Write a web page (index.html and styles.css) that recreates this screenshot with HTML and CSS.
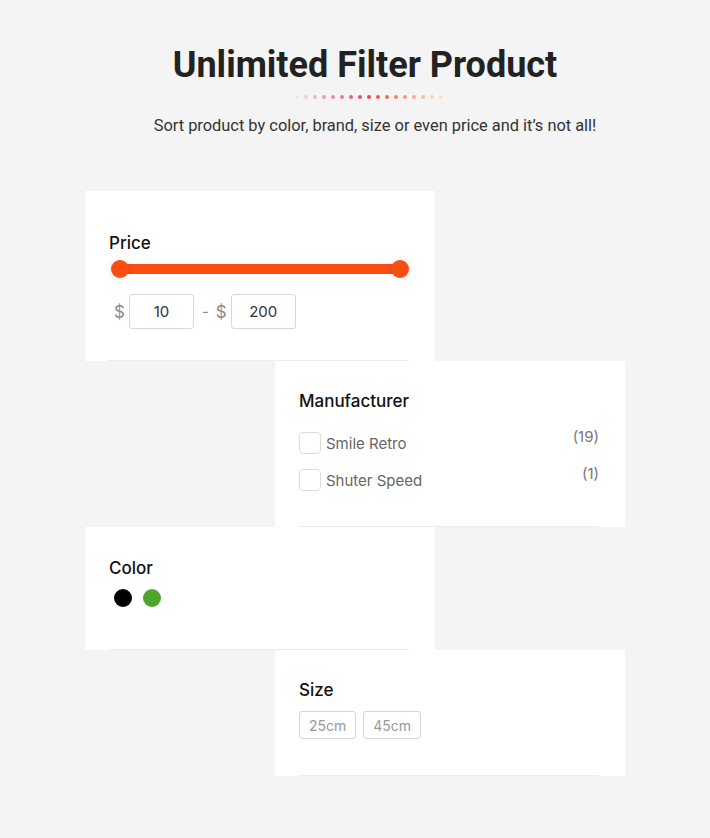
FILE: index.html
```html
<!DOCTYPE html>
<html lang="en">
<head>
<meta charset="utf-8">
<title>Unlimited Filter Product</title>
<link rel="stylesheet" href="styles.css">
</head>
<body>
<header class="intro">
  <h1 class="intro-title">Unlimited Filter Product</h1>
  <div class="dots">
    <span class="dot d1"></span><span class="dot d2"></span><span class="dot d3"></span><span class="dot d4"></span><span class="dot d5"></span><span class="dot d6"></span><span class="dot d7"></span><span class="dot d8"></span><span class="dot d9"></span><span class="dot d10"></span><span class="dot d11"></span><span class="dot d12"></span><span class="dot d13"></span><span class="dot d14"></span><span class="dot d15"></span><span class="dot d16"></span><span class="dot d17"></span>
  </div>
  <p class="intro-sub">Sort product by color, brand, size or even price and it’s not all!</p>
</header>

<main class="filters">
  <section class="card card-left card-price">
    <div class="card-inner">
      <h2 class="card-title">Price</h2>
      <div class="slider">
        <div class="slider-track"></div>
        <span class="knob knob-left"></span>
        <span class="knob knob-right"></span>
      </div>
      <div class="price-row">
        <span class="currency">$</span>
        <span class="price-box">10</span>
        <span class="dash">-</span>
        <span class="currency">$</span>
        <span class="price-box">200</span>
      </div>
    </div>
  </section>

  <section class="card card-right card-maker">
    <div class="card-inner">
      <h2 class="card-title">Manufacturer</h2>
      <ul class="check-list">
        <li class="check-item"><span class="checkbox"></span><span class="check-label">Smile Retro</span><span class="count">(19)</span></li>
        <li class="check-item"><span class="checkbox"></span><span class="check-label">Shuter Speed</span><span class="count">(1)</span></li>
      </ul>
    </div>
  </section>

  <section class="card card-left card-color">
    <div class="card-inner">
      <h2 class="card-title">Color</h2>
      <div class="swatches">
        <span class="swatch swatch-black"></span>
        <span class="swatch swatch-green"></span>
      </div>
    </div>
  </section>

  <section class="card card-right card-size">
    <div class="card-inner">
      <h2 class="card-title">Size</h2>
      <div class="sizes">
        <span class="size-btn">25cm</span>
        <span class="size-btn">45cm</span>
      </div>
    </div>
  </section>
</main>
</body>
</html>
```

FILE: styles.css
```css
* { box-sizing: border-box; }

body {
  margin: 0;
  background: #f4f4f4;
  font-family: Roboto, "Liberation Sans", sans-serif;
  color: #222;
}

.intro {
  padding-top: 43px;
  text-align: center;
  padding-left: 20px;
}

.intro-title {
  margin: 0;
  font-family: Roboto, sans-serif;
  font-weight: 700;
  font-size: 36px;
  line-height: 44px;
  color: #222;
}

.dots {
  margin-top: 8px;
  height: 4px;
  display: flex;
  justify-content: center;
  gap: 5px;
  padding-left: 8px;
}

.dot {
  width: 4px;
  height: 4px;
  border-radius: 50%;
  display: block;
}
.d1 { background: #f8dde4; }
.d2 { background: #f5c9d5; }
.d3 { background: #f2b4c6; }
.d4 { background: #ee9fb6; }
.d5 { background: #eb8ba6; }
.d6 { background: #e87796; }
.d7 { background: #e66380; }
.d8 { background: #e55464; }
.d9 { background: #e34a4a; }
.d10 { background: #e6604f; }
.d11 { background: #e97358; }
.d12 { background: #ec8765; }
.d13 { background: #ef9b75; }
.d14 { background: #f2ae88; }
.d15 { background: #f4c19e; }
.d16 { background: #f6d2b7; }
.d17 { background: #f8e1cf; }

.intro-sub {
  margin: 15px 0 0;
  font-size: 16.4px;
  line-height: 24px;
  color: #333;
  padding-left: 20px;
}

.filters {
  width: 540px;
  margin: 53px auto 0;
  display: flex;
  flex-direction: column;
  padding-bottom: 40px;
}

.card {
  width: 350px;
  background: #fff;
  padding: 30px 26px 0 24px;
  font-family: Inter, "Open Sans", sans-serif;
}

.card-left { align-self: flex-start; }
.card-right { align-self: flex-end; }

.card-inner {
  border-bottom: 1px solid #ececec;
}

.card-title {
  margin: 0;
  font-size: 17px;
  line-height: 20px;
  font-weight: 500;
  color: #111;
}

/* price */
.card-price { padding-top: 42px; }
.card-price .card-inner { padding-bottom: 31px; }

.slider {
  position: relative;
  margin-top: 7px;
  margin-left: 2px;
  height: 18px;
}
.slider-track {
  position: absolute;
  left: 9px;
  right: 9px;
  top: 4px;
  height: 10px;
  background: #f84e12;
}
.knob {
  position: absolute;
  top: 0;
  width: 18px;
  height: 18px;
  border-radius: 50%;
  background: #f84e12;
  box-shadow: 0 0 6px rgba(0, 0, 0, 0.12);
}
.knob-left { left: 0; }
.knob-right { right: 0; }

.price-row {
  margin-top: 16px;
  display: flex;
  align-items: center;
  height: 35px;
}
.currency {
  font-size: 17px;
  color: #8a8a8a;
  margin-left: 5px;
  margin-right: 4px;
}
.dash {
  font-size: 15px;
  color: #8a8a8a;
  margin-left: 8px;
  margin-right: 2px;
}
.price-box {
  width: 65px;
  height: 35px;
  border: 1px solid #d8d8d8;
  border-radius: 3px;
  display: flex;
  align-items: center;
  justify-content: center;
  font-size: 15px;
  color: #333;
}

/* manufacturer */
.card-maker .card-inner { padding-bottom: 35px; }

.check-list {
  list-style: none;
  margin: 21px 0 0;
  padding: 0;
  display: flex;
  flex-direction: column;
  gap: 15px;
}
.check-item {
  display: flex;
  align-items: center;
  height: 22px;
}
.checkbox {
  width: 22px;
  height: 22px;
  border: 1px solid #dcdcdc;
  border-radius: 4px;
  flex: none;
}
.check-label {
  margin-left: 5px;
  font-size: 15px;
  color: #666;
  flex: 1;
}
.count {
  font-size: 15px;
  color: #777;
  align-self: flex-start;
  margin-top: -5px;
}

/* color */
.card-color { padding-top: 31px; }
.card-color .card-inner { padding-bottom: 42px; }

.swatches {
  margin-top: 11px;
  display: flex;
  gap: 11px;
  padding-left: 5px;
}
.swatch {
  width: 18px;
  height: 18px;
  border-radius: 50%;
}
.swatch-black { background: #000; }
.swatch-green { background: #4fa52b; }

/* size */
.card-size .card-inner { padding-bottom: 36px; }

.sizes {
  margin-top: 11px;
  display: flex;
  gap: 7px;
}
.size-btn {
  height: 28px;
  padding: 0 9px;
  border: 1px solid #d4d4d4;
  border-radius: 3px;
  display: flex;
  align-items: center;
  font-size: 14px;
  color: #999;
}
```
